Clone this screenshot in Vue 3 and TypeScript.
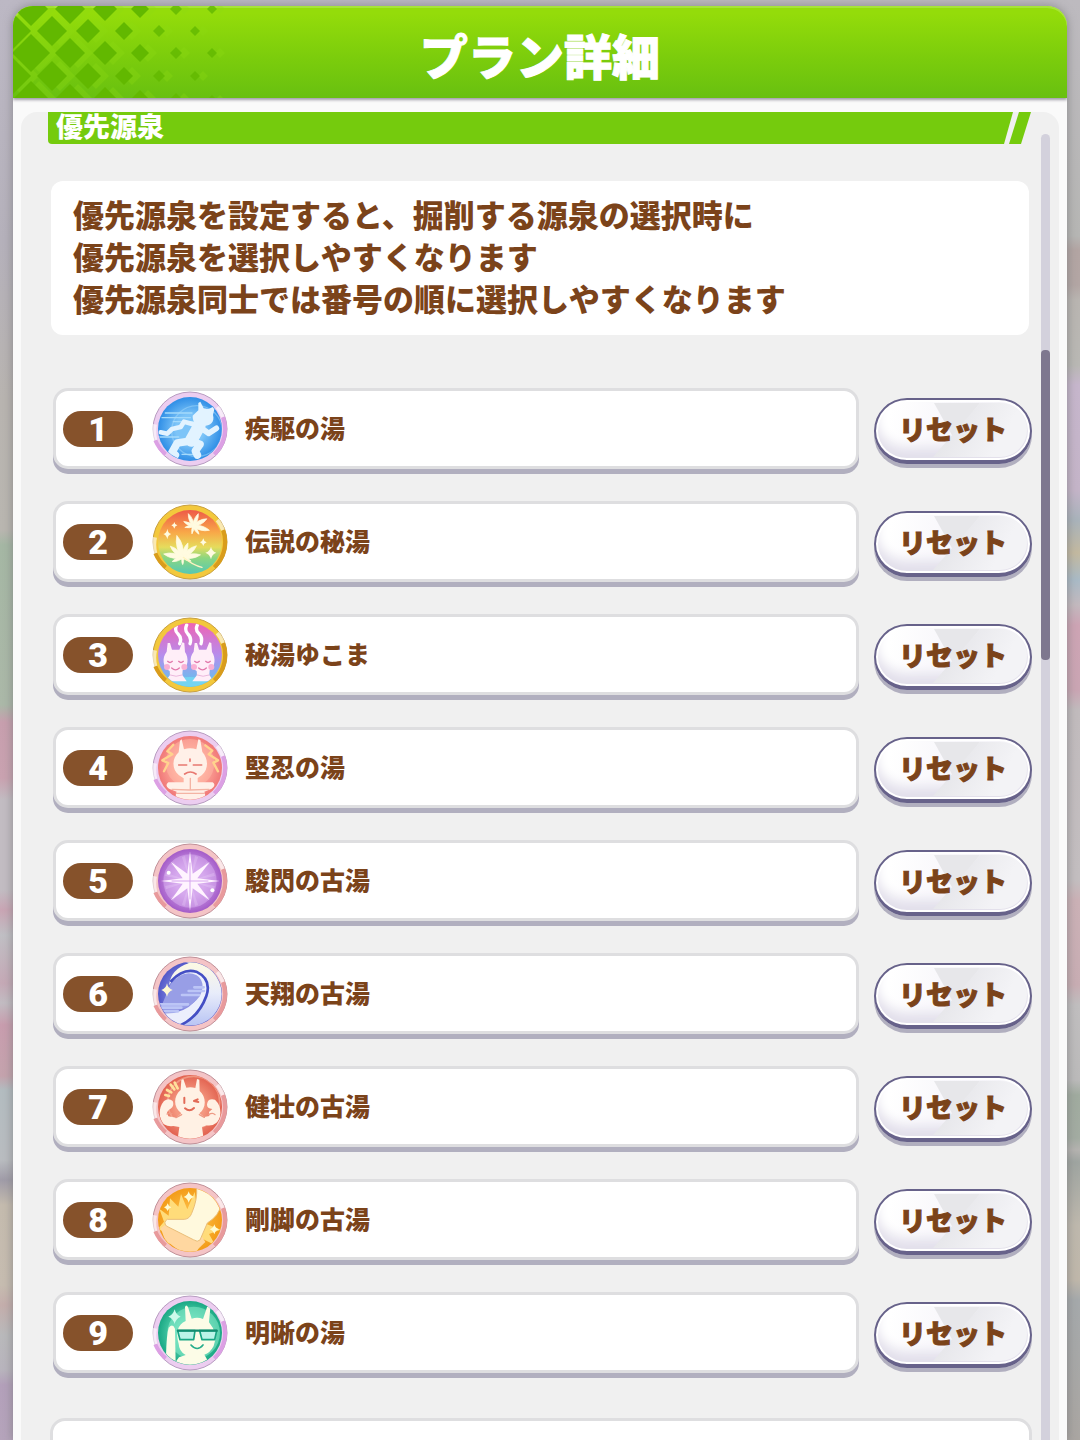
<script setup lang="ts">
import { ref } from 'vue'

type Ring = 'lilac' | 'gold' | 'rose'

interface Spring {
  id: number
  name: string
  ring: Ring
  inner: string
  outer: string
}

const springs = ref<Spring[]>([
  { id: 1, name: '疾駆の湯', ring: 'lilac', inner: '#7cc4f8', outer: '#2f8ee6' },
  { id: 2, name: '伝説の秘湯', ring: 'gold', inner: '#f8c860', outer: '#f07050' },
  { id: 3, name: '秘湯ゆこま', ring: 'gold', inner: '#d59ae8', outer: '#e070c8' },
  { id: 4, name: '堅忍の湯', ring: 'lilac', inner: '#ffae9e', outer: '#f07878' },
  { id: 5, name: '駿閃の古湯', ring: 'rose', inner: '#d0a0ea', outer: '#a45cc8' },
  { id: 6, name: '天翔の古湯', ring: 'rose', inner: '#8c90e4', outer: '#5258c8' },
  { id: 7, name: '健壮の古湯', ring: 'rose', inner: '#f49880', outer: '#e26250' },
  { id: 8, name: '剛脚の古湯', ring: 'rose', inner: '#fbb63a', outer: '#f39c18' },
  { id: 9, name: '明晰の湯', ring: 'lilac', inner: '#5ed8b4', outer: '#1aa884' },
])

const ringColors: Record<Ring, { base: string; deep: string; edge: string }> = {
  lilac: { base: '#eccdf0', deep: '#dca0e4', edge: '#b79cc0' },
  gold: { base: '#f3c83c', deep: '#d99c1c', edge: '#c8a040' },
  rose: { base: '#f4c4c6', deep: '#e89a9c', edge: '#c09098' },
}

const notes = [
  '優先源泉を設定すると、掘削する源泉の選択時に',
  '優先源泉を選択しやすくなります',
  '優先源泉同士では番号の順に選択しやすくなります',
]

const diamondRows = [
  { y: 3, xs: [18, 57, 92, 127, 163, 199], rs: [17, 15, 12, 9, 6, 5] },
  { y: 25, xs: [0, 39, 75, 111, 146, 182], rs: [18, 15, 12, 9, 6, 5] },
  { y: 47, xs: [18, 57, 92, 127, 163, 199], rs: [19, 15, 12, 9, 6, 5] },
  { y: 70, xs: [0, 39, 75, 111, 146, 182], rs: [18, 15, 13, 9, 6, 5] },
  { y: 92, xs: [18, 57, 92, 127, 163, 199], rs: [17, 14, 11, 8, 5, 3] },
]
const diamonds = diamondRows.flatMap((row) =>
  row.xs.map((x, i) => ({ x, y: row.y, r: row.rs[i] })),
)
const diamondPath = (x: number, y: number, r: number): string =>
  `M${x - r} ${y}L${x} ${y - r}L${x + r} ${y}L${x} ${y + r}Z`

// Maple leaflets as [angle, length] pairs fanned round each leaf's base
const leaves = [
  { x: 124, y: 66, lobes: [[-100, 26], [-65, 32], [-22, 40], [22, 40], [62, 46], [105, 50], [145, 30], [190, 24]] },
  { x: 92, y: 160, lobes: [[-112, 34], [-80, 58], [-48, 50], [-15, 68], [20, 46], [50, 54], [82, 54], [115, 28], [180, 22]] },
]
const lobePath = (len: number): string => {
  const w = Math.round(len / 4)
  return `M0 6Q${w} ${-Math.round(len / 2)} 0 ${-len}Q${-w} ${-Math.round(len / 2)} 0 6Z`
}

function reset(id: number): void {
  const spring = springs.value.find((s) => s.id === id)
  if (spring) spring.name = ''
}
</script>

<template>
  <div class="backdrop">
    <section class="dialog" aria-labelledby="dialog-title">
      <header class="dialog-head">
        <svg class="pattern" width="230" height="92" viewBox="0 0 230 92" aria-hidden="true">
          <path v-for="(d, i) in diamonds" :key="'l' + i" :d="diamondPath(d.x + 8, d.y, d.r)" fill="#8edb14" opacity=".3" />
          <path v-for="(d, i) in diamonds" :key="'d' + i" :d="diamondPath(d.x, d.y, d.r)" fill="#62b800" :opacity="i % 6 > 3 ? 0.8 : 1" />
        </svg>
        <h1 id="dialog-title">プラン詳細</h1>
      </header>

      <div class="panel">
        <div class="content">
          <h2 class="section-bar"><span>優先源泉</span></h2>

          <div class="notes">
            <p v-for="note in notes" :key="note">{{ note }}</p>
          </div>

          <ol class="rows">
            <li v-for="spring in springs" :key="spring.id" class="row">
              <div class="card">
                <span class="badge">{{ spring.id }}</span>
                <svg v-if="spring.name" class="icon" viewBox="0 0 228 228" aria-hidden="true">
                  <defs>
                    <radialGradient :id="'disc' + spring.id">
                      <stop offset="0.45" :stop-color="spring.inner" />
                      <stop offset="1" :stop-color="spring.outer" />
                    </radialGradient>
                    <linearGradient id="rainbow" x1="0" y1="0" x2="0" y2="1">
                      <stop offset="0" stop-color="#ee5a48" />
                      <stop offset=".35" stop-color="#f8a848" />
                      <stop offset=".58" stop-color="#e6dc5c" />
                      <stop offset=".75" stop-color="#8cd680" />
                      <stop offset="1" stop-color="#54c8b4" />
                    </linearGradient>
                    <linearGradient id="dusk" x1="0" y1="0" x2="0" y2="1">
                      <stop offset="0" stop-color="#ee64b4" />
                      <stop offset=".5" stop-color="#b78cec" />
                      <stop offset="1" stop-color="#58c8ee" />
                    </linearGradient>
                    <linearGradient id="moon" x1="0" y1="0" x2="0" y2="1">
                      <stop offset="0" stop-color="#fffbe2" />
                      <stop offset=".5" stop-color="#e8ecfa" />
                      <stop offset="1" stop-color="#b8c4f4" />
                    </linearGradient>
                    <clipPath :id="'clip' + spring.id"><circle cx="114" cy="114" r="95" /></clipPath>
                  </defs>
                  <circle cx="114" cy="114" r="111" :fill="ringColors[spring.ring].base" :stroke="ringColors[spring.ring].edge" stroke-width="3" />
                  <g fill="none" stroke-width="12">
                    <path d="M213 78A106 106 0 0 1 187 190M41 190A106 106 0 0 1 10 148" :stroke="ringColors[spring.ring].deep" />
                    <path d="M196 48A106 106 0 0 1 213 78M10 148A106 106 0 0 1 9 100" stroke="#fff" opacity=".6" />
                  </g>
                  <circle cx="114" cy="114" r="96" :fill="spring.id === 2 ? 'url(#rainbow)' : spring.id === 3 ? 'url(#dusk)' : 'url(#disc' + spring.id + ')'" />

                  <g :clip-path="'url(#clip' + spring.id + ')'" stroke-linecap="round" stroke-linejoin="round">
                    <g v-if="spring.id === 1">
                      <g fill="none" stroke="#a4dafc" stroke-width="4">
                        <circle cx="135" cy="120" r="76" opacity=".5" />
                        <path d="M40 66H120M30 80H115M64 92H125M22 138H80M90 190H125" />
                      </g>
                      <g fill="none" stroke="#e2f3ff">
                        <path d="M142 104L118 148" stroke-width="38" />
                        <path d="M146 110L170 127L193 112" stroke-width="17" />
                        <path d="M132 102L96 92L86 108L60 114L46 128L26 124" stroke-width="14" />
                        <path d="M116 150L76 156L60 184L70 192" stroke-width="23" />
                        <path d="M122 152L144 160L130 180L136 192" stroke-width="23" />
                      </g>
                      <path d="M122 74L139 58L139 36L145 32L155 52L170 54L182 48L187 54L183 72C189 94 174 105 154 105C134 105 121 94 122 74Z" fill="#e2f3ff" />
                    </g>

                    <g v-else-if="spring.id === 2" fill="#fffbe0">
                      <g v-for="leaf in leaves" :key="leaf.x" :transform="`translate(${leaf.x} ${leaf.y})`">
                        <path v-for="lobe in leaf.lobes" :key="lobe[0]" :d="lobePath(lobe[1])" :transform="`rotate(${lobe[0]})`" stroke="#fffbe0" stroke-width="2" />
                      </g>
                      <path d="M94 160Q122 184 150 190" fill="none" stroke="#fff3c0" stroke-width="4" />
                      <path d="M46 74Q48 88 58 90Q48 93 46 106Q43 93 34 90Q44 88 46 74ZM67 54Q68 62 76 64Q68 66 67 74Q65 66 58 64Q66 62 67 54ZM177 128Q180 142 193 146Q180 150 177 166Q173 150 160 146Q174 142 177 128ZM154 103Q155 112 164 115Q155 118 154 126Q152 118 144 115Q152 112 154 103Z" />
                    </g>

                    <g v-else-if="spring.id === 3">
                      <path d="M18 190Q114 170 210 190V228H18Z" fill="#74d4f2" />
                      <g fill="none" stroke="#fff" stroke-width="10">
                        <path d="M73 27Q67 42 78 51Q91 63 83 80M104 24Q97 40 107 50Q120 62 114 80M136 24Q129 39 140 49Q153 61 147 80" />
                      </g>
                      <g v-for="x in [0, 81]" :key="x" :transform="`translate(${x} 0)`">
                        <path d="M44 104L47 78L54 78L60 98L82 98L91 76L97 78L99 105C111 122 109 150 92 160L91 174L104 193H40L54 174L53 162C32 151 29 122 44 104Z" fill="#ffeef8" />
                        <path d="M47 133Q54 140 61 133M80 133Q87 140 94 133M59 153Q71 164 82 153" fill="none" stroke="#e27aac" stroke-width="4" />
                        <circle cx="45" cy="150" r="9" fill="#f9b0d4" /><circle cx="97" cy="150" r="9" fill="#f9b0d4" />
                        <path d="M54 174Q72 182 91 174" fill="none" stroke="#eab8dc" stroke-width="3" />
                      </g>
                    </g>

                    <g v-else-if="spring.id === 4">
                      <circle cx="114" cy="100" r="73" fill="#ffb9a8" opacity=".5" />
                      <path d="M64 44L46 64L61 73L31 91L49 99L36 124M160 46L181 62L170 73L198 91L184 98L198 124" fill="none" stroke="#ffd38e" stroke-width="7" />
                      <path d="M80 67L84 32L89 28L96 58Q114 52 133 58L139 28L145 30L151 66C168 84 172 116 149 136L137 144V157H182Q194 166 179 176L157 185Q164 202 152 214H78Q67 202 74 185L51 176Q37 166 49 157H95V145L81 136C58 117 60 84 80 67Z" fill="#fff0e8" />
                      <path d="M80 105H104M124 105H149M98 132Q115 120 132 132M114 87V94" fill="none" stroke="#e87870" stroke-width="5" />
                      <path d="M115 145V180M60 178L112 180L171 178M73 190H157" fill="none" stroke="#f4b4a4" stroke-width="4" />
                    </g>

                    <g v-else-if="spring.id === 5">
                      <circle cx="114" cy="114" r="80" fill="#dcb2f2" opacity=".5" />
                      <g v-for="a in 12" :key="a" :transform="`rotate(${a * 30 + 15} 114 114)`">
                        <path d="M114 114L109 38L119 38Z" fill="#ebcff8" opacity=".3" />
                      </g>
                      <path d="M114 25L122 92L173 57L136 106L203 114L136 122L173 172L122 136L114 203L106 136L57 172L92 122L27 114L92 106L57 57L106 92Z" fill="#fff4ff" />
                      <path d="M114 60V168M60 114H168" stroke="#d6a6ee" stroke-width="3" />
                      <circle cx="50" cy="89" r="6" fill="#fff" /><circle cx="181" cy="142" r="6" fill="#fff" />
                    </g>

                    <g v-else-if="spring.id === 6">
                      <path d="M94 15Q180 0 208 78Q230 155 155 208L84 210Q155 166 164 112Q168 66 130 50Q84 35 51 88Q57 39 110 22Z" fill="url(#moon)" />
                      <path d="M20 170Q88 180 128 137Q160 100 139 70Q115 41 56 79Q90 32 135 48Q179 70 163 120Q142 181 75 212H20Z" fill="#eceffc" />
                      <path d="M56 84Q94 38 134 58Q164 79 143 121Q112 166 20 170" fill="#989ee6" />
                      <path d="M58 75Q93 36 133 47Q180 70 163 120Q140 184 80 211" fill="none" stroke="#444fc4" stroke-width="8" />
                      <path d="M127 94H155M110 105H156M90 117H141M22 145H108M24 155H88M38 166H78" stroke="#bcc5f6" stroke-width="8" />
                      <path d="M45 82Q48 98 62 102Q48 107 45 122Q41 107 28 102Q42 98 45 82Z" fill="#fff9d2" />
                    </g>

                    <g v-else-if="spring.id === 7">
                      <circle cx="125" cy="100" r="78" fill="none" stroke="#f9b49c" stroke-width="5" opacity=".6" />
                      <path d="M56 47L67 61M68 41L77 58M45 63L58 70M40 78L51 81" stroke="#ffe19b" stroke-width="8" />
                      <path d="M86 63L88 33L94 30L103 56Q117 53 130 57L135 30L142 32L143 66C165 86 162 119 142 133L157 144L172 141L171 129L181 120Q161 119 166 101Q170 87 189 92Q210 112 204 145Q194 173 164 169L150 174L155 210H77L82 174L64 171Q34 174 26 153Q17 119 36 96Q50 86 62 96Q69 113 51 122L45 130L49 142L72 146L88 133C65 116 62 84 86 63Z" fill="#fff1e4" />
                      <path d="M97 86V102M126 96L137 91M126 96L139 99M99 118Q113 130 126 117" fill="none" stroke="#e26a56" stroke-width="6" />
                      <path d="M72 146L89 137M142 137L157 145M60 134Q50 132 45 135M170 137Q182 129 189 137" fill="none" stroke="#ee9a84" stroke-width="4" />
                    </g>

                    <g v-else-if="spring.id === 8">
                      <path d="M22 80L50 101L54 49L79 74L87 36L106 82L128 30L141 117L206 143L171 156L190 190L151 170L134 211L110 182L83 210L73 177L41 189L54 152L16 143L36 119Z" fill="#ffdc7a" />
                      <path d="M26 139L50 120L115 108L160 180L126 213L82 207L39 173Z" fill="#ffd7a0" />
                      <path d="M141 16Q198 27 207 67Q202 101 166 123L144 174Q137 182 124 173L43 132Q33 120 46 112L98 112Q113 110 119 94Q137 53 134 16Z" fill="#fff9dd" stroke="#e9bd78" stroke-width="3" />
                      <path d="M110 28Q113 41 127 45Q113 49 110 62Q107 49 95 45Q107 41 110 28ZM187 127Q190 139 201 142Q190 145 187 157Q183 145 173 142Q184 139 187 127ZM47 64Q49 73 58 76Q49 79 47 87Q44 79 36 76Q45 73 47 64Z" fill="#fffbd2" />
                    </g>

                    <g v-else>
                      <circle cx="125" cy="114" r="79" fill="#82e8c7" opacity=".6" />
                      <path d="M101 78L99 36Q102 27 108 36L119 71Q137 65 153 72L165 37Q172 27 175 39L171 82Q200 116 185 153Q174 174 157 179L175 210H64L81 187L101 180Q81 169 80 146Q65 95 101 78Z" fill="#fcfce7" />
                      <path d="M42 179Q44 116 50 98Q62 83 69 101L71 209L43 199Z" fill="#fcfce7" />
                      <path d="M77 107H129L125 134H84ZM143 107H194L188 134H150Z" fill="#baf4e8" stroke="#18a584" stroke-width="5" />
                      <path d="M78 107H194" stroke="#128d70" stroke-width="7" />
                      <path d="M117 150Q136 171 153 150" fill="none" stroke="#26ad8b" stroke-width="5" />
                      <path d="M68 43Q72 60 86 65Q72 70 68 87Q63 70 49 65Q63 60 68 43Z" fill="#ccfaea" />
                    </g>
                  </g>
                </svg>
                <span class="name">{{ spring.name }}</span>
              </div>
              <button type="button" class="reset" :aria-label="`${spring.id} リセット`" @click="reset(spring.id)">
                <span>リセット</span>
              </button>
            </li>
          </ol>

          <div class="next-card"></div>
        </div>

        <div class="scroll-track" aria-hidden="true"><div class="scroll-thumb"></div></div>
      </div>
    </section>
  </div>
</template>

<style>
body {
  margin: 0;
}
</style>

<style scoped>
* {
  box-sizing: border-box;
}

.backdrop {
  height: 100vh;
  padding: 6px 13px 0;
  overflow: hidden;
  font-family: 'Noto Sans CJK JP', sans-serif;
  font-weight: 900;
  color: #7b431a;
  background:
    linear-gradient(#bcb8c4 0, #b5b1bb 240px, #b8b4b0 400px, #b9b6b0 530px, #a5b7a4 545px, #abb8a8 705px, #c79fae 722px, #c9a2b0 778px, #c2bcc2 800px, #c2bcc2 890px, #c9a5b4 910px, #c0bfc4 935px, #c5a9b6 983px, #c2bcc2 1003px, #c89dae 1025px, #c4a3ad 1076px, #b3bcc0 1090px, #b9bcc0 1160px, #a09ca8 1180px, #c4bbae 1205px, #c6bcb0 1285px, #c4aeac 1305px, #b9b9bb 1335px, #b8b4bd 1370px, #b3a0ba 1385px, #b5a4bb 1440px) left / 50% 100% no-repeat,
    linear-gradient(#bdbabf 0, #b6b6b4 236px, #b3a5a3 250px, #b3a6a4 285px, #b9b5b1 300px, #b9b8b4 365px, #c6b6cc 385px, #c4b4c8 490px, #a9b3bb 520px, #c3b9a0 553px, #a9bac6 580px, #c3b9be 605px, #cda4b4 625px, #caa5b3 690px, #c1bbbd 710px, #c3bec0 880px, #cbb1b6 900px, #c8adb3 985px, #c0bebf 1005px, #bbbaba 1080px, #a0ab9f 1095px, #a3aca2 1138px, #b5b3b0 1150px, #9fa5a1 1162px, #beb8ad 1225px, #bfb7aa 1280px, #a5a9ab 1300px, #aaa6a2 1440px) right / 50% 100% no-repeat;
}

.dialog {
  display: flex;
  flex-direction: column;
  height: 100%;
  border-radius: 20px 20px 0 0;
  background: #fafafa;
  box-shadow: 0 0 8px 1px #77777a99;
}

.dialog-head {
  position: relative;
  display: flex;
  flex: none;
  align-items: center;
  justify-content: center;
  height: 92px;
  overflow: hidden;
  border-radius: 20px 20px 0 0;
  background: linear-gradient(#94dc0a 8%, #7ccd0c 55%, #68c010);
  box-shadow: inset 0 2px 0 #a6e438, 0 2px 3px #a09ca8;
}

.pattern {
  position: absolute;
  left: 0;
  top: 0;
}

h1 {
  position: relative;
  margin: 0;
  padding-top: 4px;
  font-size: 48px;
  line-height: 64px;
  font-weight: 900;
  color: #fff;
  -webkit-text-stroke: 1px #fff;
}

.panel {
  display: flex;
  flex: 1;
  gap: 9px;
  min-height: 0;
  margin: 14px 8px 0;
  padding: 0 9px 0 27px;
  border-radius: 16px 16px 0 0;
  background: #f0f0f0;
}

.content {
  flex: 1;
  min-width: 0;
}

.section-bar {
  position: relative;
  height: 32px;
  margin: 0;
  padding-left: 8px;
  font-size: 27px;
  line-height: 28px;
  font-weight: 900;
  color: #fff;
}

.section-bar::before,
.section-bar::after {
  position: absolute;
  top: 0;
  bottom: 0;
  content: '';
  background: #75cb0d;
}

.section-bar::before {
  left: 0;
  right: 19px;
  border-radius: 0 0 0 4px;
  clip-path: polygon(0 0, 100% 0, calc(100% - 9px) 100%, 0 100%);
}

.section-bar::after {
  right: 1px;
  width: 22px;
  clip-path: polygon(10px 0, 100% 0, 12px 100%, 0 100%);
}

.section-bar span {
  position: relative;
  z-index: 1;
}

.notes {
  margin: 37px 3px 0;
  padding: 12px 22px 16px;
  border-radius: 12px;
  background: #fff;
  font-size: 31px;
  line-height: 42px;
}

.notes p {
  margin: 0;
}

.rows {
  display: flex;
  flex-direction: column;
  gap: 27px;
  margin: 53px 0 0;
  padding: 0 0 0 5px;
  list-style: none;
}

.row {
  display: flex;
  align-items: center;
  gap: 15px;
}

.card {
  display: flex;
  flex: 1;
  align-items: center;
  height: 81px;
  margin-bottom: 5px;
  padding-left: 7px;
  border: 3px solid #dedee0;
  border-radius: 15px;
  background: #fff;
  box-shadow: 0 5px 0 #b1afbf;
}

.badge {
  width: 70px;
  height: 36px;
  border-radius: 18px;
  background: #86522b;
  font-family: Roboto, 'Liberation Sans', sans-serif;
  font-size: 34px;
  line-height: 36px;
  text-align: center;
  color: #fff;
}

.icon {
  width: 76px;
  height: 76px;
  margin: 0 17px 0 19px;
}

.name {
  padding-bottom: 4px;
  font-size: 25px;
  line-height: 36px;
}

.reset {
  position: relative;
  flex: none;
  width: 158px;
  height: 66px;
  padding: 0 0 2px;
  border: 2px solid #67628a;
  border-bottom-width: 4px;
  border-radius: 33px;
  background: linear-gradient(100deg, #fff 10%, #f8f7fb 45%, #f2f1f6);
  box-shadow: 0 4px 0 #b1afbf, inset 0 0 0 2px #fff, inset 0 -12px 12px #e2dfeb;
  font: inherit;
  font-size: 27px;
  line-height: 40px;
  color: #7b431a;
  -webkit-text-stroke: 1px #7b431a;
  cursor: pointer;
}

.reset::before,
.reset::after {
  position: absolute;
  inset: 3px;
  border-radius: 28px;
  content: '';
}

.reset::before {
  background: #e7e7ea;
  clip-path: polygon(55px 0, 101px 0, 74px 34px);
}

.reset::after {
  background: linear-gradient(120deg, #e4e4e8 40%, #f3f3f6 80%);
  clip-path: polygon(101px 0, 100% 0, 100% 100%, 54px 100%);
}

.reset span {
  position: relative;
  z-index: 1;
}

.next-card {
  height: 85px;
  margin: 40px 0 0 2px;
  border: 3px solid #dedee0;
  border-radius: 15px;
  background: #fff;
}

.scroll-track {
  flex: none;
  width: 9px;
  margin-top: 22px;
  padding-top: 216px;
  border-radius: 5px 5px 0 0;
  background: #d3d1dc;
}

.scroll-thumb {
  height: 310px;
  border-radius: 4px;
  background: #7e778f;
}
</style>
